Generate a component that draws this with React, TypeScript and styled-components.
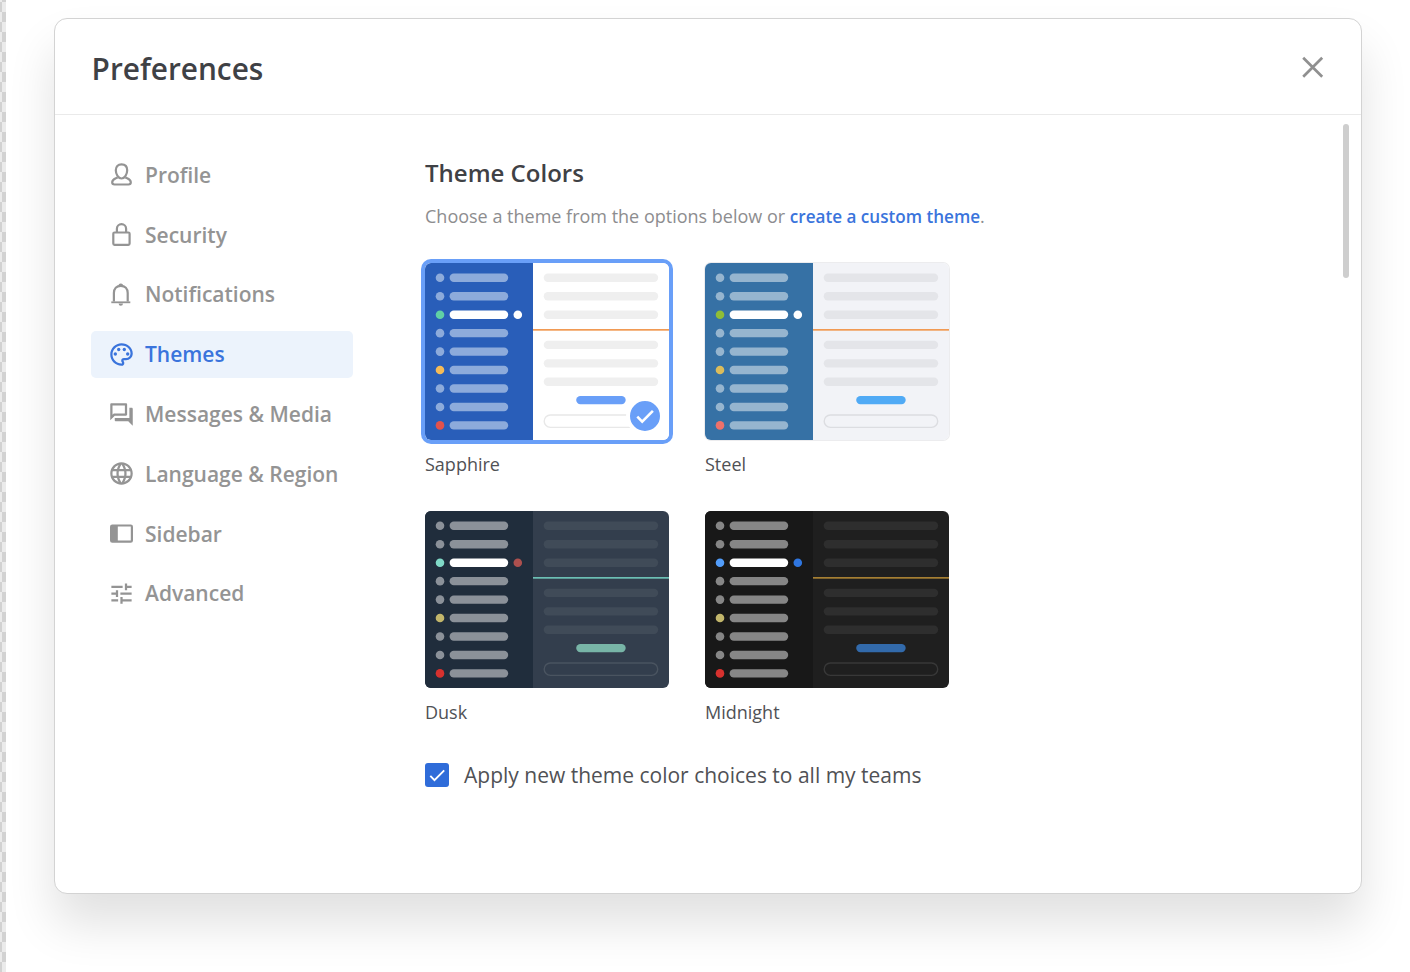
import React from "react";
import styled, { createGlobalStyle } from "styled-components";
import { MdLanguage, MdOutlineForum, MdOutlinePalette, MdTune } from "react-icons/md";

const GlobalStyle = createGlobalStyle`
  * { box-sizing: border-box; }
  body {
    margin: 0;
    background: #fff;
    color: #3f4145;
    font-family: "Open Sans", "Noto Sans", sans-serif;
    overflow: hidden;
  }
  h1, h2, p { margin: 0; }
  button { font: inherit; border: 0; padding: 0; background: none; cursor: pointer; }
`;

const Page = styled.div`
  display: flex;
  height: 972px;
`;

const CanvasEdge = styled.div`
  flex: none;
  width: 6px;
  background: conic-gradient(#ebebeb 25%, #d2d2d2 0 50%, #ebebeb 0 75%, #d2d2d2 0) -8px 2px / 20px 20px;
`;

const Modal = styled.section`
  width: 1308px;
  height: 876px;
  margin: 18px 0 0 48px;
  border: 1px solid #d3d3d3;
  border-radius: 13px;
  background: #fff;
  box-shadow: 0 30px 48px rgba(0, 0, 0, 0.12);
  display: flex;
  flex-direction: column;
`;

const Header = styled.header`
  height: 96px;
  padding: 0 37px 0 36.6px;
  border-bottom: 1px solid #eaeaea;
  display: flex;
  align-items: center;
  justify-content: space-between;
`;

const Title = styled.h1`
  font-size: 29.8px;
  line-height: 40px;
  font-weight: 600;
  padding-top: 4px;
`;

const CloseButton = styled.button`
  width: 22px;
  height: 22px;
  color: #909090;
  svg { display: block; }
`;

const Body = styled.div`
  flex: 1;
  display: flex;
  align-items: flex-start;
`;

const Nav = styled.nav`
  width: 262px;
  margin: 36.2px 0 0 36px;
  display: grid;
  gap: 12.5px;
`;

const NavItem = styled.button<{ $active?: boolean }>`
  height: 47.3px;
  padding-left: 17px;
  display: flex;
  align-items: center;
  gap: 10px;
  border-radius: 5px;
  color: ${(p) => (p.$active ? "#3a74dc" : "#949494")};
  background: ${(p) => (p.$active ? "#ecf3fc" : "transparent")};
  font-size: 21px;
  font-weight: 600;
  line-height: 30px;
  white-space: nowrap;
  svg { flex: none; width: 27px; height: 27px; }
`;

const Content = styled.main`
  flex: 1;
  padding: 41px 0 0 72px;
`;

const SectionTitle = styled.h2`
  font-size: 24px;
  line-height: 34px;
  font-weight: 600;
`;

const Hint = styled.p`
  margin-top: 12px;
  font-size: 18px;
  line-height: 28px;
  color: #8d8d8f;
  white-space: nowrap;
`;

const HintLink = styled.a`
  color: #3a74dc;
  font-size: 17.1px;
  font-weight: 600;
`;

const ThemeGrid = styled.div`
  margin-top: 32px;
  display: grid;
  grid-template-columns: 244px 244px;
  column-gap: 36px;
  row-gap: 32.3px;
`;

const ThemeName = styled.div`
  margin-top: 10px;
  font-size: 18px;
  line-height: 29px;
  color: #505155;
`;

const Thumb = styled.div<{ $selected?: boolean; $outlined?: boolean }>`
  position: relative;
  height: 177px;
  border-radius: 6px;
  box-shadow: ${(p) => (p.$selected ? "0 0 0 4px #699ff8" : p.$outlined ? "0 0 0 1px #ececee" : "none")};
  svg { display: block; }
`;

const Picture = styled.svg`
  border-radius: 6px;
`;

const SelectedBadge = styled.span`
  position: absolute;
  right: 5px;
  bottom: 5px;
  width: 38px;
  height: 38px;
  border: 4px solid #fff;
  border-radius: 50%;
  background: #699ff8;
`;

const Option = styled.label`
  margin-top: 32.6px;
  display: flex;
  align-items: center;
  gap: 15px;
  font-size: 21px;
  line-height: 30px;
  color: #505155;
`;

const Checkbox = styled.span`
  width: 24px;
  height: 24px;
  border-radius: 3px;
  background: #2f6cd9;
  svg { display: block; }
`;

const ScrollThumb = styled.div`
  width: 6px;
  height: 154px;
  margin: 9px 12px 0 0;
  border-radius: 3px;
  background: #cecece;
`;

const stroke = { fill: "none", stroke: "currentColor", strokeWidth: 2.2 } as const;

const ProfileIcon = () => (
  <svg viewBox="0 0 27 27" {...stroke}>
    <path d="M13.5 3.4c3.6 0 5.7 2.3 5.7 5.9 0 3.9-2.5 8.2-5.7 8.2S7.8 13.2 7.8 9.3c0-3.6 2.1-5.9 5.7-5.9Z" />
    <path d="M9.7 16.3c-2 1.4-5.5 1.7-5.5 5 0 1.5 1 2.2 2.3 2.2h14c1.3 0 2.3-.7 2.3-2.2 0-3.3-3.5-3.6-5.5-5" />
  </svg>
);

const LockIcon = () => (
  <svg viewBox="0 0 27 27" {...stroke}>
    <rect x="5.3" y="11.5" width="16.3" height="12.3" rx="1.2" />
    <path d="M8.9 11.5V7.8a4.6 4.6 0 0 1 9.2 0v3.7" />
  </svg>
);

const BellIcon = () => (
  <svg viewBox="0 0 27 27" {...stroke}>
    <path d="M5.9 20.5V12c0-4.3 2.7-7.2 6.9-7.2s6.9 2.9 6.9 7.2v8.5" />
    <path d="M3.3 21.3h19" strokeWidth="1.8" />
    <path d="M10.7 5.1a2.15 2.15 0 1 1 4.2 0ZM10.6 22.6h4.4a2.2 2.2 0 0 1-4.4 0Z" fill="currentColor" stroke="none" />
  </svg>
);

const SidebarIcon = () => (
  <svg viewBox="0 0 27 27" {...stroke}>
    <rect x="3.1" y="5.5" width="20.8" height="16.2" rx="1.2" />
    <path d="M3 5.5h6.8v16.2H3Z" fill="currentColor" stroke="none" />
  </svg>
);

const navItems = [
  { label: "Profile", icon: <ProfileIcon /> },
  { label: "Security", icon: <LockIcon /> },
  { label: "Notifications", icon: <BellIcon /> },
  { label: "Themes", icon: <MdOutlinePalette />, active: true },
  { label: "Messages & Media", icon: <MdOutlineForum /> },
  { label: "Language & Region", icon: <MdLanguage /> },
  { label: "Sidebar", icon: <SidebarIcon /> },
  { label: "Advanced", icon: <MdTune /> },
];

type Theme = {
  name: string;
  side: string;
  item: string;
  online: string;
  away: string;
  dnd: string;
  mention: string;
  center: string;
  line: string;
  divider: string;
  button: string;
  input: string;
  selected?: boolean;
  outlined?: boolean;
};

const themes: Theme[] = [
  {
    name: "Sapphire", side: "#295eb9", item: "#8dabdb", online: "#60d1a5", away: "#f5bb57", dnd: "#e2524c",
    mention: "#fff", center: "#fff", line: "#efefef", divider: "#f19a53", button: "#699ff8", input: "#e8e8e8", selected: true,
  },
  {
    name: "Steel", side: "#3671a5", item: "#96b5cf", online: "#8fbd37", away: "#dbbc5b", dnd: "#ed716b",
    mention: "#fff", center: "#f2f3f7", line: "#e4e5e9", divider: "#f19a53", button: "#50aaf5", input: "#dcdde1", outlined: true,
  },
  {
    name: "Dusk", side: "#202d3c", item: "#8b9199", online: "#80d9c7", away: "#c2b66b", dnd: "#d7312e",
    mention: "#ad504e", center: "#333e4d", line: "#404b58", divider: "#6cbfb4", button: "#78b5a7", input: "#4a5460",
  },
  {
    name: "Midnight", side: "#181818", item: "#868686", online: "#529dfa", away: "#c2b66b", dnd: "#d7312e",
    mention: "#2f76e0", center: "#1f1f1f", line: "#2e2e2e", divider: "#a67f33", button: "#326aab", input: "#383838",
  },
];

const ROW = 18.45;

function dotColor(t: Theme, i: number) {
  if (i === 2) return t.online;
  if (i === 5) return t.away;
  if (i === 8) return t.dnd;
  return t.item;
}

const ThemePicture = ({ theme: t }: { theme: Theme }) => (
  <Picture width="244" height="177" viewBox="0 0 244 177">
    <rect width="244" height="177" fill={t.center} />
    <rect width="108" height="177" fill={t.side} />
    {Array.from({ length: 9 }, (_, i) => (
      <g key={i}>
        <circle cx="15" cy={14.8 + i * ROW} r="4.3" fill={dotColor(t, i)} />
        <rect x="24.6" y={10.6 + i * ROW} width="58.6" height="8.4" rx="4.2" fill={i === 2 ? "#fff" : t.item} />
      </g>
    ))}
    <circle cx="92.8" cy={14.8 + 2 * ROW} r="4.3" fill={t.mention} />
    {[10.6, 29.05, 47.5, 77.7, 96.15, 114.6].map((y) => (
      <rect key={y} x="118.7" y={y} width="114.5" height="8.4" rx="4.2" fill={t.line} />
    ))}
    <rect x="108" y="66" width="136" height="1.7" fill={t.divider} />
    <rect x="151.2" y="132.9" width="49.5" height="8.4" rx="4.2" fill={t.button} />
    <rect x="119.2" y="152" width="113.5" height="12.4" rx="6.2" fill="none" stroke={t.input} strokeWidth="1.4" />
  </Picture>
);

export default function App() {
  return (
    <Page>
      <GlobalStyle />
      <CanvasEdge />
      <Modal>
        <Header>
          <Title>Preferences</Title>
          <CloseButton aria-label="Close">
            <svg width="22" height="22" viewBox="0 0 22 22" fill="none" stroke="currentColor" strokeWidth="2.7">
              <path d="M1.2 1.7 20.2 20.7M20.2 1.7 1.2 20.7" />
            </svg>
          </CloseButton>
        </Header>
        <Body>
          <Nav>
            {navItems.map((n) => (
              <NavItem key={n.label} $active={n.active}>
                {n.icon}
                {n.label}
              </NavItem>
            ))}
          </Nav>
          <Content>
            <SectionTitle>Theme Colors</SectionTitle>
            <Hint>
              Choose a theme from the options below or <HintLink>create a custom theme</HintLink>.
            </Hint>
            <ThemeGrid>
              {themes.map((t) => (
                <div key={t.name}>
                  <Thumb $selected={t.selected} $outlined={t.outlined}>
                    <ThemePicture theme={t} />
                    {t.selected && (
                      <SelectedBadge>
                        <svg width="30" height="30" viewBox="0 0 30 30" fill="none" stroke="#fff" strokeWidth="2.6">
                          <path d="m7.3 15.6 4.9 5L22.9 9.9" />
                        </svg>
                      </SelectedBadge>
                    )}
                  </Thumb>
                  <ThemeName>{t.name}</ThemeName>
                </div>
              ))}
            </ThemeGrid>
            <Option>
              <Checkbox>
                <svg width="24" height="24" viewBox="0 0 24 24" fill="none" stroke="#fff" strokeWidth="1.9">
                  <path d="m5.3 12.8 4.2 4.3L19.2 7.4" />
                </svg>
              </Checkbox>
              Apply new theme color choices to all my teams
            </Option>
          </Content>
          <ScrollThumb />
        </Body>
      </Modal>
    </Page>
  );
}
